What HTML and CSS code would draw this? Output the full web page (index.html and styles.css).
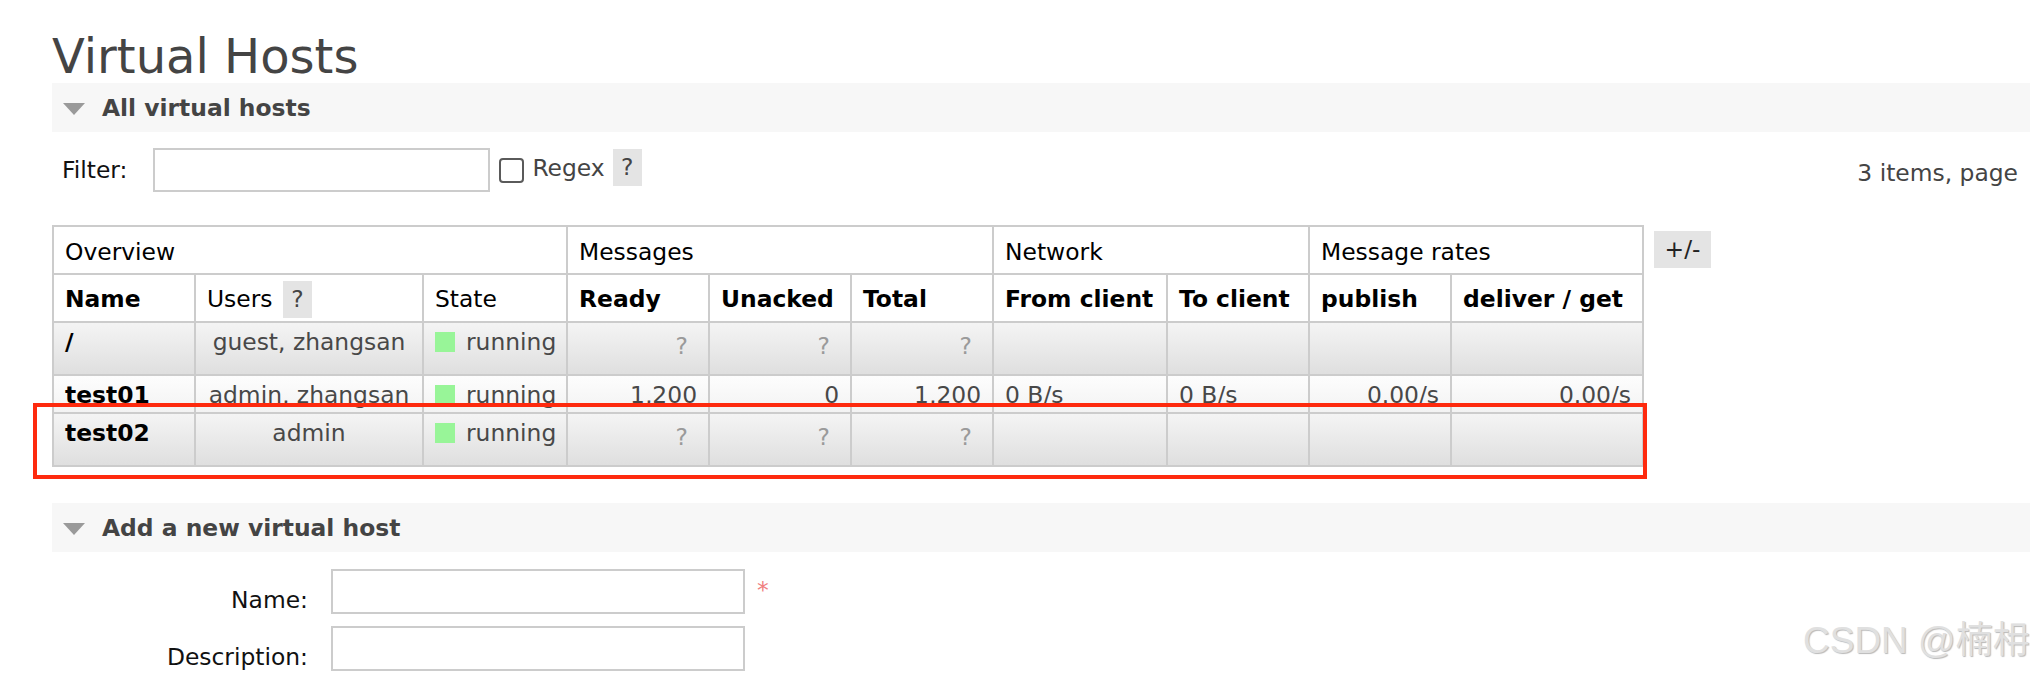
FILE: index.html
```html
<!DOCTYPE html>
<html lang="en">
<head>
<meta charset="utf-8">
<title>Virtual Hosts</title>
<link rel="stylesheet" href="styles.css">
</head>
<body>
<div class="page">
  <h1 class="title">Virtual Hosts</h1>

  <section class="section">
    <div class="section-bar"><span class="tri"></span><span class="section-title">All virtual hosts</span></div>
    <div class="filter-row">
      <label class="filter-label" for="flt">Filter:</label>
      <input id="flt" class="text-input filter-input" type="text">
      <input class="checkbox" type="checkbox">
      <span class="regex">Regex</span>
      <span class="help help-filter">?</span>
      <span class="pager">3 items, page</span>
    </div>

    <div class="table-wrap">
      <table class="list">
        <colgroup>
          <col class="c-name"><col class="c-users"><col class="c-state">
          <col class="c-num"><col class="c-num"><col class="c-num">
          <col class="c-from"><col class="c-num">
          <col class="c-num"><col class="c-deliver">
        </colgroup>
        <thead>
          <tr class="group-row">
            <th colspan="3">Overview</th>
            <th colspan="3">Messages</th>
            <th colspan="2">Network</th>
            <th colspan="2">Message rates</th>
          </tr>
          <tr class="col-row">
            <th class="b">Name</th>
            <th>Users <span class="help help-th">?</span></th>
            <th>State</th>
            <th class="b">Ready</th>
            <th class="b">Unacked</th>
            <th class="b">Total</th>
            <th class="b">From client</th>
            <th class="b">To client</th>
            <th class="b">publish</th>
            <th class="b">deliver / get</th>
          </tr>
        </thead>
        <tbody>
          <tr class="alt1">
            <td class="name">/</td>
            <td class="center">guest, zhangsan</td>
            <td><span class="state-dot"></span>running</td>
            <td class="right unknown">?</td>
            <td class="right unknown">?</td>
            <td class="right unknown">?</td>
            <td></td><td></td><td></td><td></td>
          </tr>
          <tr class="alt2 short">
            <td class="name">test01</td>
            <td class="center">admin, zhangsan</td>
            <td><span class="state-dot"></span>running</td>
            <td class="right">1,200</td>
            <td class="right">0</td>
            <td class="right">1,200</td>
            <td>0 B/s</td>
            <td>0 B/s</td>
            <td class="right">0.00/s</td>
            <td class="right">0.00/s</td>
          </tr>
          <tr class="alt1">
            <td class="name">test02</td>
            <td class="center">admin</td>
            <td><span class="state-dot"></span>running</td>
            <td class="right unknown">?</td>
            <td class="right unknown">?</td>
            <td class="right unknown">?</td>
            <td></td><td></td><td></td><td></td>
          </tr>
        </tbody>
      </table>
      <span class="toggle">+/-</span>
    </div>
  </section>

  <section class="section section-add">
    <div class="section-bar"><span class="tri"></span><span class="section-title">Add a new virtual host</span></div>
    <div class="form">
      <label class="form-label" for="vh-name">Name:</label>
      <input id="vh-name" class="text-input form-input" type="text">
      <span class="mandatory">*</span>
      <label class="form-label" for="vh-desc">Description:</label>
      <input id="vh-desc" class="text-input form-input" type="text">
      <span></span>
    </div>
  </section>

  <div class="annotation"></div>
  <div class="watermark">CSDN @楠枏</div>
</div>
</body>
</html>
```

FILE: styles.css
```css
html, body {
  margin: 0;
  padding: 0;
  overflow: hidden;
  background: #ffffff;
}

body {
  font-family: "DejaVu Sans", Verdana, sans-serif;
  font-size: 23.4px;
  color: #484848;
}

.page {
  position: relative;
  width: 2100px;
  height: 675px;
  padding: 29px 0 0 52px;
}

.title {
  margin: 0;
  font-size: 48px;
  line-height: 54px;
  font-weight: normal;
  color: #444444;
}

.section-bar {
  box-sizing: border-box;
  height: 49px;
  padding: 2px 0 0 11px;
  display: flex;
  align-items: center;
  background: #f7f7f7;
}

.tri {
  width: 0;
  height: 0;
  border-left: 11px solid transparent;
  border-right: 11px solid transparent;
  border-top: 12px solid #9a9a9a;
  margin-right: 17px;
}

.section-title {
  font-weight: bold;
  color: #444444;
  line-height: 27px;
}

/* filter row */
.filter-row {
  display: flex;
  align-items: center;
  height: 44px;
  margin-top: 16px;
  padding: 0 134px 0 10px;
}

.filter-label {
  color: #111111;
  line-height: 27px;
}

.text-input {
  box-sizing: border-box;
  border: 2px solid #cccccc;
  background: #ffffff;
  outline: none;
  margin: 0;
  padding: 0;
}

.filter-input {
  width: 337px;
  height: 44px;
  margin-left: 26px;
}

.checkbox {
  appearance: none;
  -webkit-appearance: none;
  box-sizing: border-box;
  width: 25px;
  height: 25px;
  margin: 0 0 0 9px;
  border: 2px solid #5a5a5a;
  border-radius: 4px;
  background: #ffffff;
}

.regex {
  margin-left: 8px;
  color: #444444;
  line-height: 27px;
  padding-bottom: 3px;
}

.help {
  display: inline-block;
  width: 29px;
  height: 37px;
  line-height: 37px;
  text-align: center;
  background: #e4e4e4;
  color: #444444;
  font-weight: normal;
}

.help-filter {
  margin-left: 8px;
  align-self: flex-start;
  margin-top: 1px;
}

.help-th {
  margin-left: 3px;
}

.pager {
  margin-left: auto;
  padding-top: 6px;
  line-height: 27px;
  color: #444444;
}

/* table */
.table-wrap {
  display: flex;
  align-items: flex-start;
  margin-top: 33px;
}

.list {
  border-collapse: collapse;
  table-layout: fixed;
  width: 1592px;
}

.c-name { width: 142px; }
.c-users { width: 228px; }
.c-state { width: 144px; }
.c-num { width: 142px; }
.c-from { width: 174px; }
.c-deliver { width: 192px; }

.list th,
.list td {
  border: 2px solid #cccccc;
  padding: 0 11px;
  line-height: 27px;
  white-space: nowrap;
  overflow: hidden;
  text-align: left;
}

.list th {
  background: #ffffff;
  color: #000000;
  font-weight: normal;
  vertical-align: middle;
}

.list th.b {
  font-weight: bold;
}

.group-row { height: 48px; }
.group-row th { padding-top: 4px; }

.col-row { height: 48px; }
.col-row th { padding-top: 3px; }

.list td {
  vertical-align: top;
  padding-top: 6px;
}

.alt1 { height: 53px; }
.alt1 td { background: linear-gradient(#f4f4f4, #dfdfdf); }

.alt2 { height: 38px; }
.alt2 td {
  background: linear-gradient(#fdfdfd, #f3f3f3);
  padding-bottom: 0;
}

.list td.name {
  font-weight: bold;
  color: #000000;
}

.list td.center { text-align: center; }
.list td.right { text-align: right; }

.list td.unknown {
  color: #9a9a9a;
  padding-top: 10px;
  padding-right: 20px;
}

.state-dot {
  display: inline-block;
  width: 20px;
  height: 20px;
  background: #98f598;
  vertical-align: -2px;
  margin-right: 11px;
}

.toggle {
  display: inline-block;
  width: 57px;
  height: 37px;
  line-height: 37px;
  margin: 6px 0 0 10px;
  text-align: center;
  background: #e4e4e4;
  color: #222222;
}

/* add section */
.section-add {
  margin-top: 36px;
}

.form {
  display: grid;
  grid-template-columns: 279px 414px auto;
  row-gap: 12px;
  margin-top: 17px;
}

.form-label {
  align-self: end;
  text-align: right;
  padding: 0 23px 0 0;
  line-height: 27px;
  color: #111111;
}

.form-input {
  width: 414px;
  height: 45px;
}

.mandatory {
  align-self: start;
  padding: 8px 0 0 12px;
  line-height: 27px;
  color: #f08080;
}

/* overlays */
.annotation {
  position: absolute;
  left: 33px;
  top: 403px;
  width: 1614px;
  height: 76px;
  box-sizing: border-box;
  border: 4.5px solid #fe2a0e;
}

.watermark {
  position: absolute;
  left: 1803px;
  top: 622px;
  font-family: "Liberation Sans", "Noto Sans CJK SC", sans-serif;
  font-size: 37px;
  line-height: 37px;
  color: #e0e0e0;
  text-shadow: 1px 1px 1px rgba(0, 0, 0, 0.28);
  white-space: nowrap;
}
```
